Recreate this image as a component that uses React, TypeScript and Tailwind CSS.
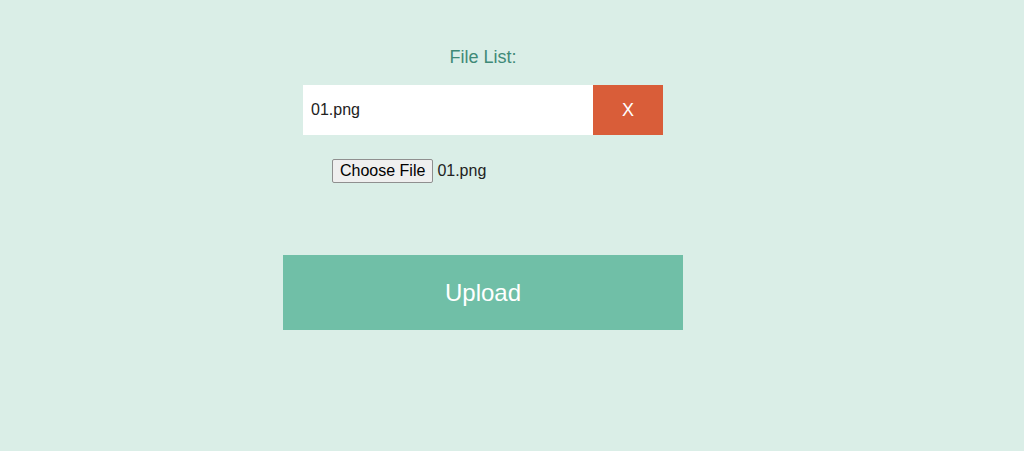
export default function App() {
  return (
    <div className="min-h-[451px] w-full bg-[#daeee7] font-['Liberation_Sans',Arial,sans-serif]">
      <div className="ml-[283px] w-[400px] pt-[46px]">
        <p className="text-center text-lg leading-[22px] text-[#3f8a77]">File List:</p>
        <div className="mx-5 mt-[17px] flex h-[50px]">
          <div className="flex flex-1 items-center bg-white pl-2 text-base text-[#222]">01.png</div>
          <button className="w-[70px] bg-[#d95d39] text-lg text-white">X</button>
        </div>
        <div className="ml-[49px] mt-6 flex items-center gap-1 text-base text-[#222]">
          <button className="h-6 rounded-[2px] border border-[#8f8f8f] bg-[#efefef] px-[7px] leading-none text-black">
            Choose File
          </button>
          <span>01.png</span>
        </div>
        <button className="mt-[72px] h-[75px] w-full bg-[#70bfa7] text-2xl text-white">Upload</button>
      </div>
    </div>
  );
}
